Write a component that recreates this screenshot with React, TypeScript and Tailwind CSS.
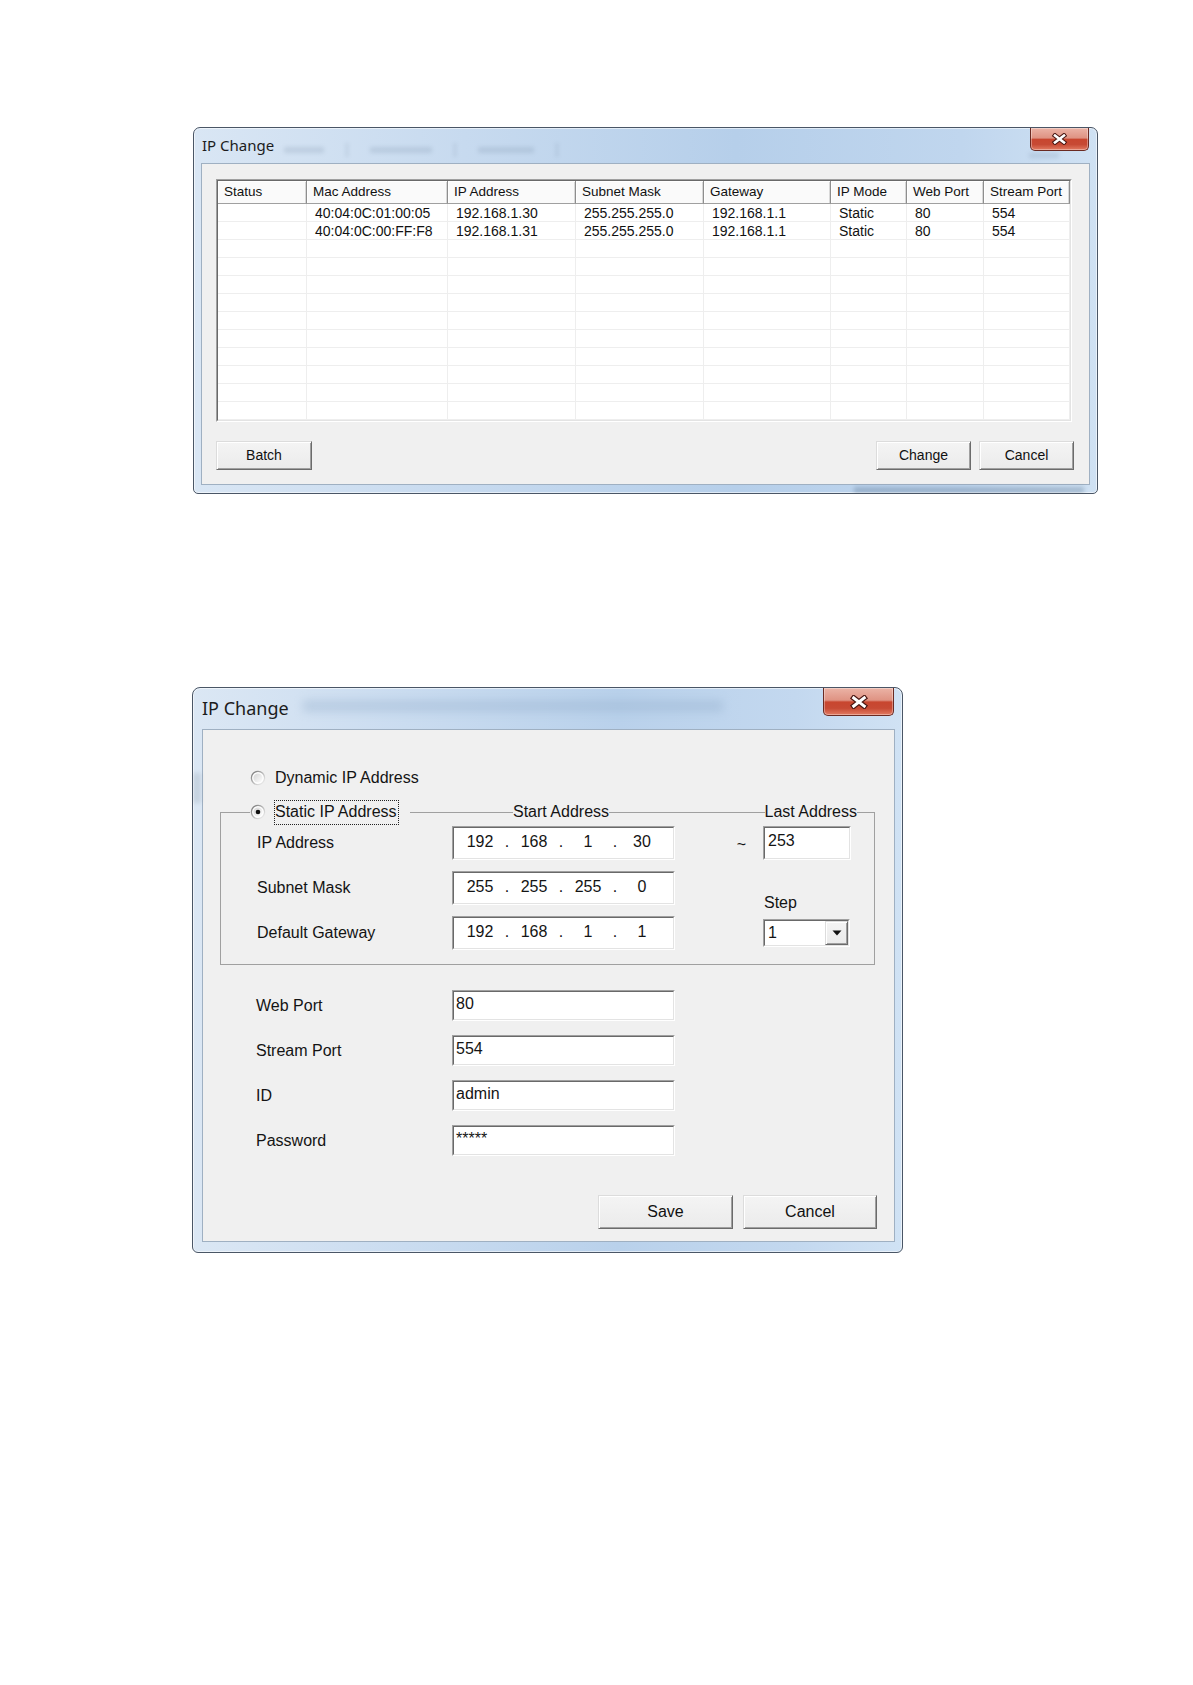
import React from "react";

const SANS = "font-['Liberation_Sans',Arial,sans-serif]";
const TITLE = "font-['Noto_Sans','Open_Sans',sans-serif]";

const COLS = ["Status", "Mac Address", "IP Address", "Subnet Mask", "Gateway", "IP Mode", "Web Port", "Stream Port"];

const DEVICES = [
  ["", "40:04:0C:01:00:05", "192.168.1.30", "255.255.255.0", "192.168.1.1", "Static", "80", "554"],
  ["", "40:04:0C:00:FF:F8", "192.168.1.31", "255.255.255.0", "192.168.1.1", "Static", "80", "554"],
];

const EMPTY_ROWS = 11;

function Sunken({ className = "", inner = "", children }: { className?: string; inner?: string; children?: React.ReactNode }) {
  return (
    <div className={"border border-t-[#a0a0a0] border-l-[#a0a0a0] border-r-white border-b-white " + className}>
      <div className={"h-full w-full border border-t-[#696969] border-l-[#696969] border-r-[#e3e3e3] border-b-[#e3e3e3] bg-white " + inner}>
        {children}
      </div>
    </div>
  );
}

function Btn({ className = "", children }: { className?: string; children?: React.ReactNode }) {
  return (
    <button
      className={
        "flex items-center justify-center border border-t-[#dcdcdc] border-l-[#dcdcdc] border-r-[#6b6b6b] border-b-[#6b6b6b] bg-[linear-gradient(180deg,#f4f4f4,#ebebeb)] shadow-[inset_1px_1px_0_#fff,inset_-1px_-1px_0_#a0a0a0] text-[#111] " +
        className
      }
    >
      {children}
    </button>
  );
}

function CloseBtn({ className = "", big }: { className?: string; big?: boolean }) {
  return (
    <div
      className={
        "absolute top-0 flex items-center justify-center rounded-b-[5px] border border-t-0 border-[#6a2a22] bg-[linear-gradient(180deg,#ebb3a6_0%,#df9383_45%,#c8462f_52%,#c74a34_75%,#e27b62_100%)] shadow-[inset_0_0_0_1px_rgba(255,255,255,0.35)] " +
        className
      }
    >
      <svg width={big ? 20 : 17} height={big ? 14 : 12} viewBox="0 0 17 12">
        <path d="M4 2.5 L13 9.5 M13 2.5 L4 9.5" stroke="#4a1712" strokeWidth="4.6" strokeLinecap="square" />
        <path d="M4 2.5 L13 9.5 M13 2.5 L4 9.5" stroke="#ffffff" strokeWidth="2.6" strokeLinecap="square" />
      </svg>
    </div>
  );
}

function Radio({ checked, id }: { checked?: boolean; id: string }) {
  return (
    <svg width="16" height="16" viewBox="0 0 16 16" className="shrink-0">
      <defs>
        <linearGradient id={id + "-ring"} x1="0" y1="0" x2="1" y2="1">
          <stop offset="0" stopColor="#6f6f6f" />
          <stop offset="0.5" stopColor="#b9b9b9" />
          <stop offset="1" stopColor="#f7f7f7" />
        </linearGradient>
        <linearGradient id={id + "-in"} x1="0" y1="0" x2="1" y2="1">
          <stop offset="0" stopColor="#d4d4d4" />
          <stop offset="1" stopColor="#ffffff" />
        </linearGradient>
      </defs>
      <circle cx="8" cy="8" r="6.6" fill="#fff" stroke={`url(#${id}-ring)`} strokeWidth="1.3" />
      <circle cx="8" cy="8" r="4.6" fill={`url(#${id}-in)`} />
      {checked && <circle cx="8" cy="8" r="2.3" fill="#111" />}
    </svg>
  );
}

function IpBox({ parts }: { parts: string[] }) {
  return (
    <Sunken className="h-[34px] w-[223px]" inner="flex items-center pl-[5px] pb-[2px]">
      {parts.map((p, i) => (
        <React.Fragment key={i}>
          {i > 0 && <span className="w-[12px] text-center">.</span>}
          <span className="w-[42px] text-center">{p}</span>
        </React.Fragment>
      ))}
    </Sunken>
  );
}

function DeviceWindow() {
  const grid = "grid grid-cols-[89px_141px_128px_128px_127px_76px_77px_86px]";
  return (
    <div className="relative ml-[1px] flex h-[367px] w-[905px] flex-col overflow-hidden rounded-t-[7px] rounded-b-[5px] border border-[#4a5666] bg-[linear-gradient(90deg,#d9e6f4_0%,#c7daef_30%,#b6cfea_60%,#c0d6ee_85%,#cfe1f3_100%)] shadow-[inset_0_0_0_1px_rgba(255,255,255,0.55)]">
      <div className="relative flex h-[35px] shrink-0 items-center pl-[8px]">
        {/* blurred stuff behind the glass */}
        <div className="absolute left-[90px] top-[15px] flex items-center gap-[22px] opacity-20 blur-[2px]">
          <span className="h-[6px] w-[40px] bg-[#6c819a]" />
          <span className="h-[14px] w-[2px] bg-[#5b6f86]" />
          <span className="h-[6px] w-[62px] bg-[#6c819a]" />
          <span className="h-[14px] w-[2px] bg-[#5b6f86]" />
          <span className="h-[6px] w-[56px] bg-[#6c819a]" />
          <span className="h-[14px] w-[2px] bg-[#5b6f86]" />
        </div>
        <span className="absolute left-[835px] top-[25px] h-[5px] w-[30px] bg-[#6c819a] opacity-20 blur-[2px]" />
        <span className={"relative text-[15px] text-[#1c1c1c] " + TITLE}>IP Change</span>
      </div>
      <CloseBtn className="right-[8px] h-[23px] w-[59px]" />
      <div className="absolute bottom-0 left-[660px] h-[6px] w-[230px] bg-[#46617f] opacity-30 blur-[2px]" />

      <div className={"mx-[7px] mb-[8px] flex flex-1 flex-col border border-[#9fb0c2] bg-[#f0f0f0] pl-[14px] pr-[15px] pt-[15px] text-[#111] " + SANS}>
        <Sunken className="h-[243px] w-[856px] shrink-0" inner="overflow-hidden">
          <div className={grid + " h-[23px]"}>
            {COLS.map((c) => (
              <div
                key={c}
                className="flex items-center whitespace-nowrap border-r border-b border-r-[#8e8e8e] border-b-[#a0a0a0] bg-[#fafafa] pl-[6px] text-[13.5px] shadow-[inset_1px_1px_0_#fff,inset_-1px_0_0_#d8d8d8]"
              >
                {c}
              </div>
            ))}
          </div>
          {DEVICES.map((r, i) => (
            <div key={i} className={grid + " h-[18px]"}>
              {r.map((c, j) => (
                <div key={j} className="flex items-center whitespace-nowrap border-r border-b border-[#eeeeee] pl-[8px] text-[14px] leading-none">
                  {c}
                </div>
              ))}
            </div>
          ))}
          {Array.from({ length: EMPTY_ROWS }, (_, i) => (
            <div key={i} className={grid + " h-[18px]"}>
              {COLS.map((c) => (
                <div key={c} className="border-r border-b border-[#eeeeee]" />
              ))}
            </div>
          ))}
        </Sunken>

        <div className="mt-[19px] flex h-[29px] items-center gap-[8px] text-[14px]">
          <Btn className="h-[29px] w-[96px]">Batch</Btn>
          <div className="flex-1" />
          <Btn className="h-[29px] w-[95px]">Change</Btn>
          <Btn className="h-[29px] w-[95px]">Cancel</Btn>
        </div>
      </div>
    </div>
  );
}

function SettingsWindow() {
  const line = "self-end h-[11px] border-t border-[#a0a0a0]";
  const fields = [
    ["Web Port", "80"],
    ["Stream Port", "554"],
    ["ID", "admin"],
    ["Password", "*****"],
  ];
  return (
    <div className="relative mt-[193px] flex h-[566px] w-[711px] flex-col overflow-hidden rounded-t-[8px] rounded-b-[6px] border border-[#4a5666] bg-[linear-gradient(90deg,#dbe7f4_0%,#cadcf0_30%,#b9d1eb_60%,#c3d8ef_85%,#d0e2f4_100%)] shadow-[inset_0_0_0_1px_rgba(255,255,255,0.55)]">
      <div className="relative flex h-[41px] shrink-0 items-center pl-[9px]">
        <div className="absolute left-[110px] top-[12px] h-[12px] w-[420px] bg-[#8ea9c7] opacity-35 blur-[5px]" />
        <span className={"relative text-[18px] text-[#1c1c1c] " + TITLE}>IP Change</span>
      </div>
      <CloseBtn big className="right-[8px] h-[28px] w-[71px]" />
      <div className="absolute left-0 top-[85px] h-[30px] w-[8px] bg-[#51606f] opacity-15 blur-[2px]" />

      <div className={"ml-[9px] mr-[7px] mb-[10px] flex flex-1 flex-col border border-[#9fb0c2] bg-[#f0f0f0] pt-[37px] text-[16px] text-[#141414] " + SANS}>
        <div className="flex h-[22px] items-center gap-[9px] pl-[47px]">
          <Radio id="dyn" />
          <span className="whitespace-nowrap">Dynamic IP Address</span>
        </div>

        <div className="ml-[17px] mt-[12px] w-[655px]">
          <div className="flex h-[22px] items-center">
            <div className={line + " w-[30px] border-l"} />
            <Radio id="sta" checked />
            <div className="w-[8px]" />
            <div className="flex h-[25px] w-[125px] items-center whitespace-nowrap border border-dotted border-[#222]">Static IP Address</div>
            <div className="w-[11px]" />
            <div className={line + " w-[103px]"} />
            <span className="whitespace-nowrap">Start Address</span>
            <div className={line + " flex-1"} />
            <span className="whitespace-nowrap">Last Address</span>
            <div className={line + " w-[18px] border-r"} />
          </div>

          <div className="grid auto-rows-[34px] grid-cols-[231px_223px_88px_88px] gap-y-[11px] border-x border-b border-[#a0a0a0] pb-[14px] pt-[3px]">
            <div className="flex items-center pl-[36px]">IP Address</div>
            <IpBox parts={["192", "168", "1", "30"]} />
            <div className="flex items-center justify-end pr-[17px] pt-[4px]">~</div>
            <Sunken className="h-[34px] w-[88px]" inner="flex items-center pl-[3px] pb-[4px]">253</Sunken>

            <div className="flex items-center pl-[36px]">Subnet Mask</div>
            <IpBox parts={["255", "255", "255", "0"]} />
            <div />
            <div className="flex items-end translate-y-[10px] pl-[1px]">Step</div>

            <div className="flex items-center pl-[36px]">Default Gateway</div>
            <IpBox parts={["192", "168", "1", "1"]} />
            <div />
            <div className="flex items-center">
              <Sunken className="h-[28px] w-[87px]" inner="flex items-center justify-between pl-[3px]">
                <span>1</span>
                <Btn className="h-full w-[23px]">
                  <svg width="10" height="6" viewBox="0 0 10 6">
                    <path d="M0.5 0.5 H9.5 L5 5.5 Z" fill="#111" />
                  </svg>
                </Btn>
              </Sunken>
            </div>
          </div>
        </div>

        <div className="mt-[25px] flex flex-col gap-[14px]">
          {fields.map(([label, val]) => (
            <div key={label} className="flex h-[31px] items-center">
              <div className="w-[249px] pl-[53px]">{label}</div>
              <Sunken className="h-[31px] w-[223px]" inner="flex items-center pl-[2px] pb-[3px]">
                {val}
              </Sunken>
            </div>
          ))}
        </div>

        <div className="mt-[39px] flex justify-end gap-[10px] pr-[17px]">
          <Btn className="h-[34px] w-[135px]">Save</Btn>
          <Btn className="h-[34px] w-[134px]">Cancel</Btn>
        </div>
      </div>
    </div>
  );
}

export default function App() {
  return (
    <div className="min-h-[1685px] w-[1193px] bg-white pl-[192px] pt-[127px]">
      <DeviceWindow />
      <SettingsWindow />
    </div>
  );
}
